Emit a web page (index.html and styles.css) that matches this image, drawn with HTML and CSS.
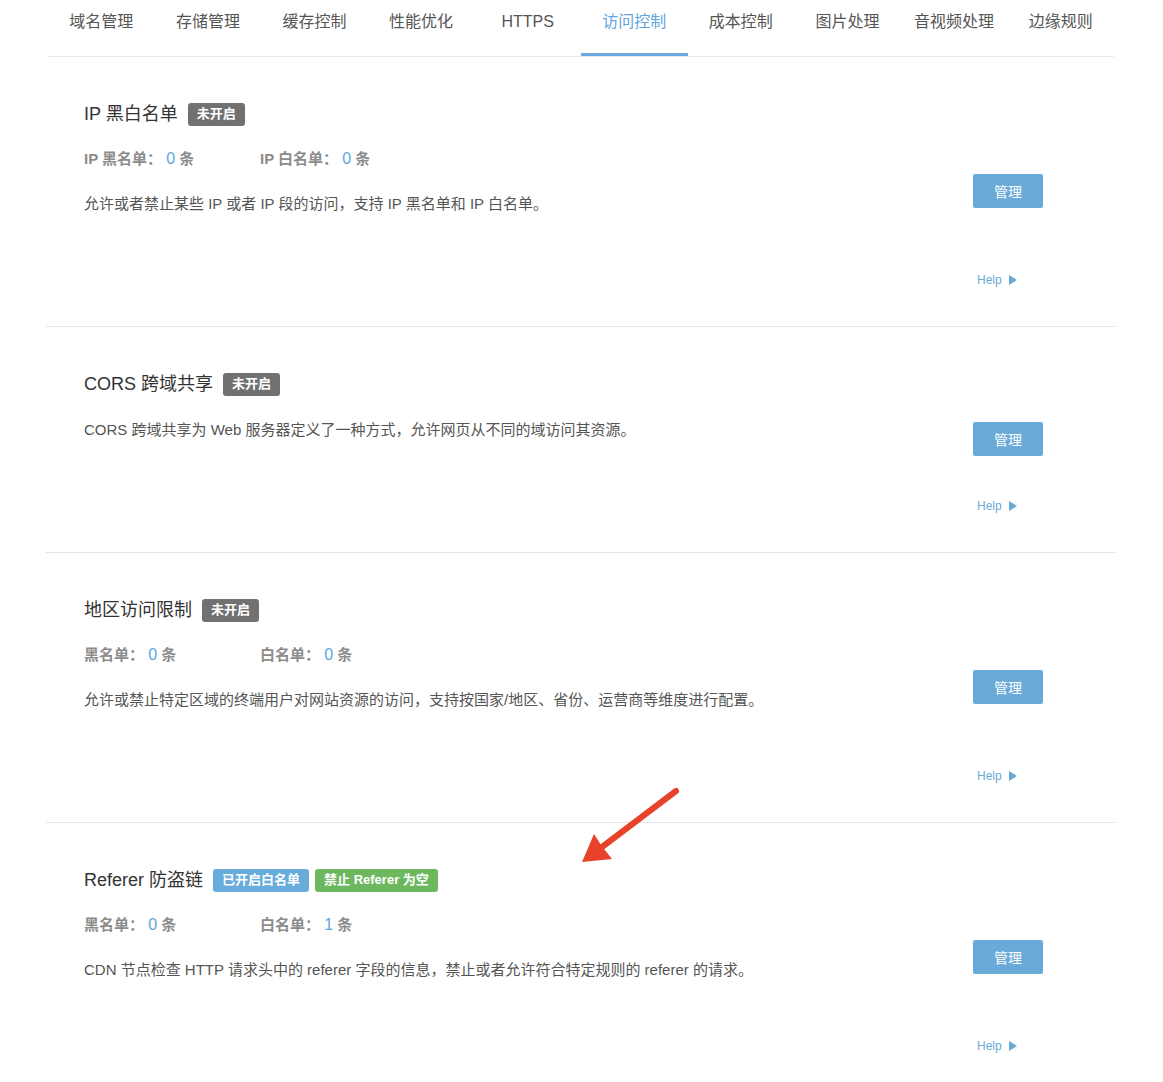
FILE: index.html
```html
<!DOCTYPE html>
<html lang="zh-CN">
<head>
<meta charset="utf-8">
<title>访问控制</title>
<link rel="stylesheet" href="styles.css">
</head>
<body>
<div class="page">
  <nav class="tabs">
    <div class="tab">域名管理</div>
    <div class="tab">存储管理</div>
    <div class="tab">缓存控制</div>
    <div class="tab">性能优化</div>
    <div class="tab">HTTPS</div>
    <div class="tab active">访问控制</div>
    <div class="tab">成本控制</div>
    <div class="tab">图片处理</div>
    <div class="tab">音视频处理</div>
    <div class="tab">边缘规则</div>
  </nav>

  <section class="card">
    <div class="card-main">
      <h2 class="card-title">IP 黑白名单<span class="badge badge-off">未开启</span></h2>
      <div class="stats">
        <span class="stat">IP 黑名单： <em>0</em> 条</span>
        <span class="stat">IP 白名单： <em>0</em> 条</span>
      </div>
      <p class="desc">允许或者禁止某些 IP 或者 IP 段的访问，支持 IP 黑名单和 IP 白名单。</p>
    </div>
    <div class="card-side">
      <button class="btn">管理</button>
      <a class="help">Help<span class="tri"></span></a>
    </div>
  </section>

  <section class="card">
    <div class="card-main">
      <h2 class="card-title">CORS 跨域共享<span class="badge badge-off">未开启</span></h2>
      <p class="desc">CORS 跨域共享为 Web 服务器定义了一种方式，允许网页从不同的域访问其资源。</p>
    </div>
    <div class="card-side">
      <button class="btn">管理</button>
      <a class="help">Help<span class="tri"></span></a>
    </div>
  </section>

  <section class="card">
    <div class="card-main">
      <h2 class="card-title">地区访问限制<span class="badge badge-off">未开启</span></h2>
      <div class="stats">
        <span class="stat">黑名单： <em>0</em> 条</span>
        <span class="stat">白名单： <em>0</em> 条</span>
      </div>
      <p class="desc">允许或禁止特定区域的终端用户对网站资源的访问，支持按国家/地区、省份、运营商等维度进行配置。</p>
    </div>
    <div class="card-side">
      <button class="btn">管理</button>
      <a class="help">Help<span class="tri"></span></a>
    </div>
  </section>

  <section class="card">
    <div class="card-main">
      <h2 class="card-title">Referer 防盗链<span class="badge badge-blue">已开启白名单</span><span class="badge badge-green">禁止 Referer 为空</span></h2>
      <div class="stats">
        <span class="stat">黑名单： <em>0</em> 条</span>
        <span class="stat">白名单： <em>1</em> 条</span>
      </div>
      <p class="desc">CDN 节点检查 HTTP 请求头中的 referer 字段的信息，禁止或者允许符合特定规则的 referer 的请求。</p>
    </div>
    <div class="card-side">
      <button class="btn">管理</button>
      <a class="help">Help<span class="tri"></span></a>
    </div>
  </section>
</div>

<svg class="annot" width="1163" height="1082" viewBox="0 0 1163 1082" aria-hidden="true">
  <line x1="676" y1="791" x2="602" y2="847" stroke="#e8432a" stroke-width="6" stroke-linecap="round"/>
  <polygon points="582,862 594,834 601,845 612,859" fill="#e8432a"/>
</svg>
</body>
</html>
```

FILE: styles.css
```css
* { box-sizing: border-box; }

html, body {
  margin: 0;
  padding: 0;
  background: #fff;
}

body {
  font-family: "Liberation Sans", "Noto Sans CJK SC", sans-serif;
  color: #333;
  position: relative;
}

.page {
  margin-left: 46px;
  width: 1070px;
}

.tabs {
  display: flex;
  margin: 0 2px;
  height: 57px;
  border-bottom: 1px solid #e8e8ee;
}

.tab {
  flex: 0 0 106.6px;
  text-align: center;
  font-size: 16px;
  line-height: 22px;
  padding-top: 11px;
  color: #555;
  height: 56px;
}

.tab.active {
  color: #5ea6dd;
  box-shadow: inset 0 -3px 0 #6aaae0;
}

.card {
  display: grid;
  grid-template-columns: 1fr 143px;
  border-bottom: 1px solid #e5e5e5;
}

.card-main {
  padding: 45px 0 112px 38px;
}

.card-title {
  margin: 0;
  display: flex;
  align-items: center;
  font-size: 18px;
  font-weight: normal;
  line-height: 24px;
  color: #333;
}

.badge {
  display: inline-flex;
  align-items: center;
  height: 23px;
  padding: 0 9px;
  border-radius: 3px;
  color: #fff;
  font-size: 13px;
  font-weight: bold;
  margin-left: 6px;
}

.card-title > .badge:nth-of-type(1) {
  margin-left: 10px;
}

.badge-off { background: #717171; }
.badge-blue { background: #68acdc; }
.badge-green { background: #6db85f; }

.stats {
  display: flex;
  margin-top: 22px;
  font-size: 15px;
  line-height: 22px;
  color: #8c8c8c;
  font-weight: 600;
}

.stat {
  width: 176px;
  white-space: nowrap;
}

.stat em {
  font-style: normal;
  font-weight: normal;
  font-size: 16px;
  color: #5ea6dd;
}

.desc {
  margin: 24px 0 0;
  font-size: 15px;
  line-height: 20px;
  color: #555;
}

.card-side {
  display: grid;
  grid-template-rows: 1fr auto 1fr;
  justify-items: start;
}

.btn {
  grid-row: 2;
  width: 70px;
  height: 34px;
  border: 0;
  border-radius: 2px;
  background: #6aaad8;
  color: #fff;
  font-family: "Liberation Sans", "Noto Sans CJK SC", sans-serif;
  font-size: 14px;
  padding: 0;
  margin-top: -2px;
}

.help {
  grid-row: 3;
  align-self: end;
  margin: 0 0 38px 4px;
  display: flex;
  align-items: center;
  font-size: 12px;
  line-height: 16px;
  color: #6aaad8;
}

.tri {
  display: inline-block;
  margin-left: 7px;
  width: 0;
  height: 0;
  border-top: 5px solid transparent;
  border-bottom: 5px solid transparent;
  border-left: 8px solid #6aaad8;
}

.annot {
  position: absolute;
  top: 0;
  left: 0;
  pointer-events: none;
}
```
